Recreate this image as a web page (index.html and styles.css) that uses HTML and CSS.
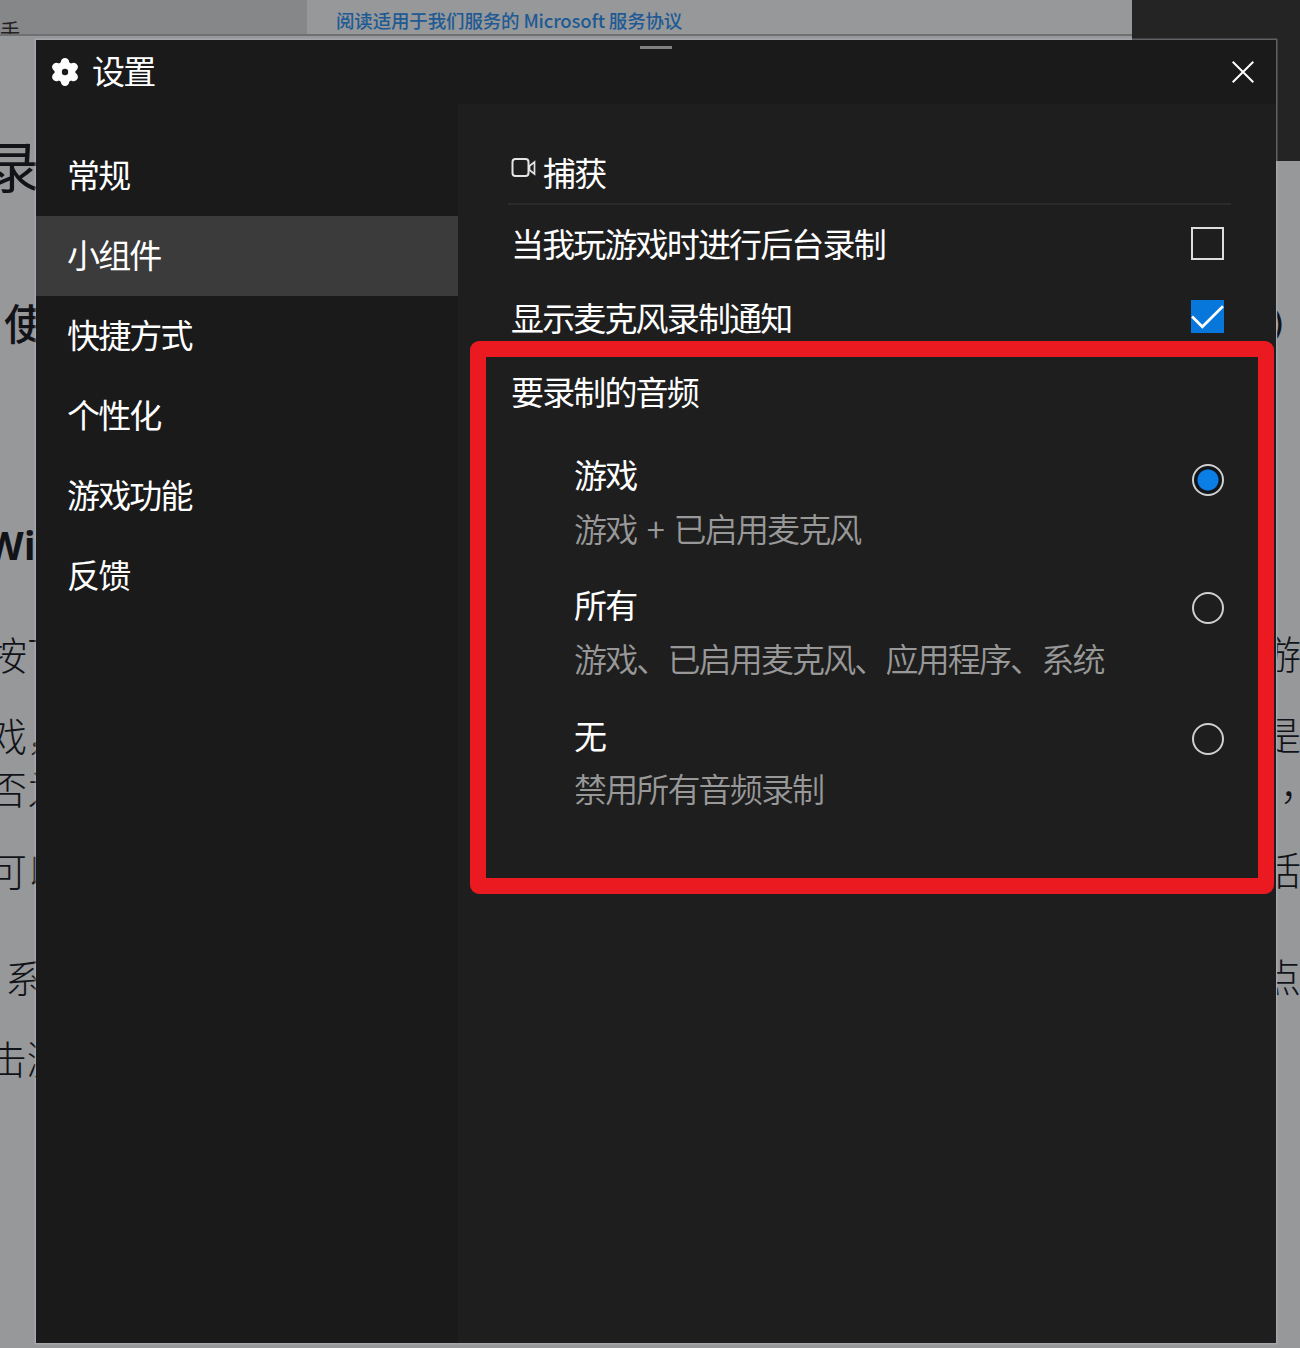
FILE: index.html
```html
<!DOCTYPE html>
<html lang="zh-CN">
<head>
<meta charset="utf-8">
<title>设置</title>
<link rel="stylesheet" href="styles.css">
</head>
<body>
<div class="desktop">
  <div class="top-strip">
    <div class="strip-tab"><span>手</span></div>
    <div class="strip-link"><a>阅读适用于我们服务的 Microsoft 服务协议</a></div>
  </div>
  <div class="dark-corner"></div>
  <div class="gutter gutter-left">
    <p class="h1">录</p>
    <p class="h2">使</p>
    <p class="h3">Wi</p>
    <p class="t1">按下</p>
    <p class="t2">戏，</p>
    <p class="t3">否为</p>
    <p class="t4">可以</p>
    <p class="t5">系</p>
    <p class="t6">击激</p>
  </div>
  <div class="gutter gutter-right">
    <p class="r0">）</p>
    <p class="r1">游</p>
    <p class="r2">是</p>
    <p class="r3">，</p>
    <p class="r4">括</p>
    <p class="r5">点</p>
  </div>

  <section class="window">
    <header class="titlebar">
      <svg class="gear" viewBox="0 0 28 30">
        <g stroke="#fff" stroke-width="8.400" stroke-linecap="round">
          <path d="M14 5.200V24.800M5.300 10l17.400 10M22.700 10L5.300 20"/>
        </g>
        <circle cx="14" cy="15" r="10.500" fill="#fff"/>
        <circle cx="14" cy="15" r="3.200" fill="#1a1a1a"/>
      </svg>
      <h1>设置</h1>
      <svg class="close" viewBox="0 0 24 24"><path d="M2.500 2.500l19 19M21.500 2.500l-19 19" stroke="#fff" stroke-width="1.800" fill="none"/></svg>
      <i class="grip"></i>
    </header>
    <div class="body">
      <nav>
        <a>常规</a>
        <a class="active">小组件</a>
        <a>快捷方式</a>
        <a>个性化</a>
        <a>游戏功能</a>
        <a>反馈</a>
      </nav>
      <main>
        <h2>
          <svg class="camera" viewBox="0 0 26 22" fill="none" stroke="#e4e4e4" stroke-width="2">
            <rect x="1.500" y="2" width="16" height="17" rx="3"/>
            <path d="M18.500 9l5-4v12l-5-4z" stroke-width="1.700"/>
          </svg>
          <span>捕获</span>
        </h2>
        <div class="row"><span>当我玩游戏时进行后台录制</span><i class="check"></i></div>
        <div class="row"><span>显示麦克风录制通知</span>
          <i class="check on"><svg viewBox="0 0 32 32"><path d="M1 16l10 10L31 6" fill="none" stroke="#fff" stroke-width="2.600"/></svg></i>
        </div>
        <div class="row"><span>要录制的音频</span></div>
        <div class="option">
          <div><b>游戏</b><small>游戏 + 已启用麦克风</small></div><i class="radio on"></i>
        </div>
        <div class="option second">
          <div><b>所有</b><small>游戏、已启用麦克风、应用程序、系统</small></div><i class="radio"></i>
        </div>
        <div class="option third">
          <div><b>无</b><small>禁用所有音频录制</small></div><i class="radio"></i>
        </div>
      </main>
    </div>
  </section>
  <div class="highlight"></div>
</div>
</body>
</html>
```
FILE: styles.css
```css
* { box-sizing: border-box; margin: 0; padding: 0; }
body {
  font-family: "Noto Sans CJK SC", sans-serif;
  font-size: 33px;
  letter-spacing: -1.850px;
  color: #fff;
}
i { font-style: normal; display: block; }
.desktop {
  position: relative;
  width: 1300px;
  height: 1348px;
  overflow: hidden;
  background: #97989a;
}
.top-strip {
  display: flex;
  width: 1132px;
  height: 36px;
  border-bottom: 2px solid #6f7072;
  overflow: hidden;
}
.strip-tab {
  width: 307px;
  background: #868789;
  color: #222;
  font-size: 20px;
  line-height: 24px;
  padding-top: 19px;
}
.strip-tab span { margin-left: 0; }
.strip-link {
  flex: 1;
  background: #97989a;
  padding-left: 29px;
  font-size: 18.500px;
  line-height: 40px;
  letter-spacing: -0.160px;
  color: #205a93;
  font-weight: 500;
  white-space: nowrap;
}
.dark-corner {
  position: absolute;
  left: 1132px;
  top: 0;
  width: 168px;
  height: 161px;
  background: #242424;
}

/* Document page showing on either side of the window */
.gutter {
  position: absolute;
  top: 33px;
  bottom: 0;
  overflow: hidden;
  color: #111318;
  font-size: 39px;
  font-weight: 300;
  letter-spacing: 0;
}
.gutter p { height: 50px; line-height: 50px; white-space: nowrap; }
.gutter-left { left: 0; width: 36px; }
.gutter-right { left: 1277px; width: 23px; top: 161px; }
.gutter .h1 { margin: 106px 0 0 -16px; font-size: 56px; font-weight: 400; }
.gutter .h2 { margin: 108px 0 0 4px; font-size: 42px; font-weight: 500; }
.gutter .h3 { margin: 173px 0 0 -14px; font: 700 39px/50px "Open Sans", sans-serif; }
.gutter .t1 { margin: 58px 0 0 -12px; }
.gutter .t2 { margin: 31px 0 0 -12px; }
.gutter .t3 { margin: 3px 0 0 -12px; }
.gutter .t4 { margin: 32px 0 0 -12px; }
.gutter .t5 { margin: 57px 0 0 5px; }
.gutter .t6 { margin: 31px 0 0 -12px; }
.gutter .r0 { margin: 137px 0 0 -7px; font-size: 36px; font-weight: 500; }
.gutter .r1 { margin: 279px 0 0 -15px; }
.gutter .r2 { margin: 31px 0 0 -15px; }
.gutter .r3 { margin: 0 0 0 3px; }
.gutter .r4 { margin: 35px 0 0 -15px; }
.gutter .r5 { margin: 57px 0 0 -15px; }

.window {
  position: absolute;
  left: 36px;
  top: 40px;
  width: 1240px;
  height: 1303px;
  display: flex;
  flex-direction: column;
  background: #1a1a1a;
  box-shadow: 0 0 0 1.500px rgba(190, 190, 200, 0.4);
}
.titlebar {
  position: relative;
  height: 64px;
  flex: none;
  display: flex;
  align-items: center;
  padding: 0 20px 0 15px;
}
.gear { width: 28px; height: 30px; }
.titlebar h1 { font-size: 33px; font-weight: 400; line-height: 60px; margin: -5px 0 0 13px; }
.close { width: 26px; height: 26px; margin-left: auto; }
.grip {
  position: absolute;
  left: 604px;
  top: 6px;
  width: 32px;
  height: 3px;
  background: #808080;
}
.body { flex: 1; display: flex; }
nav { width: 422px; padding-top: 32px; }
nav a { display: block; height: 80px; line-height: 76px; padding-left: 31px; }
nav .active { background: #3b3b3b; }
main { flex: 1; background: #1e1e1e; padding: 36px 45px 0 50px; }
main h2 {
  display: flex;
  height: 65px;
  border-bottom: 2px solid #2a2a2c;
  padding-left: 3px;
  font-size: 33px;
  font-weight: 400;
  line-height: 65px;
}
.camera { width: 26px; height: 22px; margin: 17px 6px 0 0; }
.row {
  display: flex;
  justify-content: space-between;
  align-items: center;
  height: 74px;
  line-height: 74px;
  padding: 0 7px 0 3px;
}
.row span { margin-top: -3px; }
.row:nth-of-type(1) { margin-top: 2px; }
.check { width: 33px; height: 33px; border: 2px solid #ddd; margin-top: -1px; }
.check.on { border: 0; background: #0877db; margin-top: -4px; }
.check svg { display: block; width: 33px; height: 33px; }
.option {
  display: flex;
  justify-content: space-between;
  padding: 18px 7px 0 66px;
  height: 130px;
}
.option b, .option small { display: block; font-size: 33px; font-weight: 400; line-height: 54px; }
.option small { color: #989898; font-weight: 350; word-spacing: 5px; }
.option.second { height: 131px; }
.option.third small { margin-top: -1px; }
.radio {
  width: 32px;
  height: 32px;
  border: 2px solid #cfcfcf;
  border-radius: 50%;
  margin-top: 15px;
}
.radio.on { background: radial-gradient(circle, #0b7ee6 10px, #10151c 11px); margin-top: 17px; }
.highlight {
  position: absolute;
  left: 470px;
  top: 341px;
  width: 804px;
  height: 553px;
  border: 16px solid #ea1a20;
  border-radius: 9px;
}
```
